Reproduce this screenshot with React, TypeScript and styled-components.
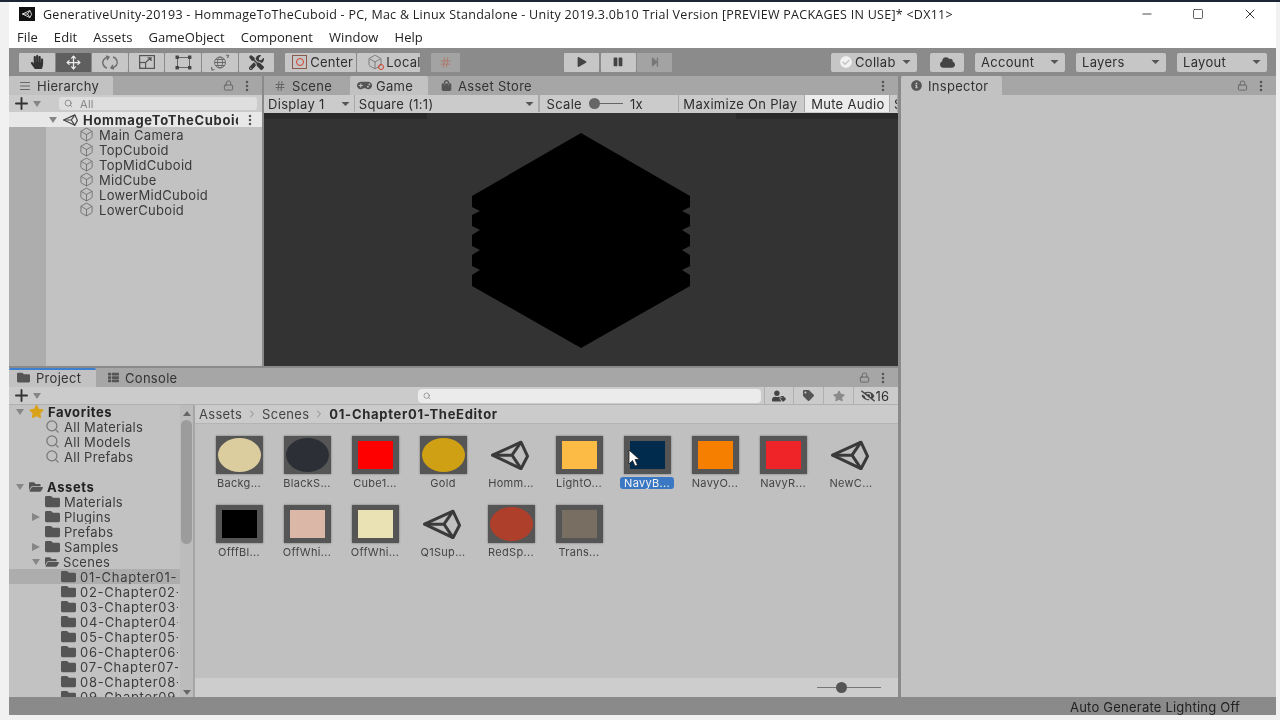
import styled, { createGlobalStyle } from 'styled-components'
import { Box, ChevronRight, EllipsisVertical, Hash, Lock, Minus, Move, Plus, Search, Square, TextAlignJustify, X } from 'lucide-react'
import {
  FaCheckCircle,
  FaCloud,
  FaEyeSlash,
  FaFolder,
  FaFolderOpen,
  FaGamepad,
  FaHandPaper,
  FaInfoCircle,
  FaPause,
  FaPlay,
  FaShoppingBag,
  FaStar,
  FaStepForward,
  FaTag,
  FaThList,
  FaTools,
  FaUserTag,
} from 'react-icons/fa'

const INK = '#2e2e2e'
const FONT = '"Inter", "Liberation Sans", sans-serif'

const GlobalStyle = createGlobalStyle`
  html, body {
    margin: 0;
    padding: 0;
    background: #f1f1f1;
    overflow: hidden;
  }
  * { box-sizing: border-box; }
`

function UnityMark({ size = 38, color = '#333' }: { size?: number; color?: string }) {
  return (
    <svg width={size} height={size * 0.8} viewBox="0 0 38 30" fill="none" stroke={color} strokeWidth="3" strokeLinejoin="round">
      <path d="M1.5 15 L30 2 L36.5 16 L30 28.5 Z" />
      <path d="M1.5 15 H21 L30 2 M21 15 L30 28.5" />
    </svg>
  )
}

function Caret({ dir = 'down', color = '#868686' }: { dir?: 'down' | 'right'; color?: string }) {
  return (
    <svg width="10" height="10" viewBox="0 0 10 10" fill={color}>
      {dir === 'down' ? <path d="M1 2 H9 L5 8 Z" /> : <path d="M1 1 L9 5 L1 9 Z" />}
    </svg>
  )
}

function DropCaret() {
  return (
    <svg width="9" height="6" viewBox="0 0 9 6" fill="#555">
      <path d="M0.5 1 H8.5 L4.5 5 Z" />
    </svg>
  )
}

function MoveDots() {
  return <EllipsisVertical size={14} color="#555" strokeWidth={2.4} />
}

function RotateIcon() {
  return (
    <svg width="18" height="15" viewBox="0 0 18 15" fill="none" stroke="#6e6e6e" strokeWidth="1.4">
      <path d="M7 2 C3 3 1 6 2 9 C2.6 11 4 12.5 6 13" />
      <path d="M5 1 L8 2 L6 5" />
      <path d="M11 13 C15 12 17 9 16 6 C15.4 4 14 2.5 12 2" />
      <path d="M13 14 L10 13 L12 10" />
    </svg>
  )
}

function ScaleIcon() {
  return (
    <svg width="16" height="14" viewBox="0 0 16 14" fill="none" stroke="#555" strokeWidth="1.2">
      <rect x="0.6" y="0.6" width="14.8" height="12.8" />
      <rect x="0.6" y="7.5" width="6" height="5.9" />
      <path d="M7 7 L12 2.8 M8.5 2.8 H12 V6" />
    </svg>
  )
}

function RectIcon() {
  return (
    <svg width="17" height="15" viewBox="0 0 17 15" fill="#444" stroke="none">
      <path d="M3 2 H14 V3 H3 Z M3 12 H14 V13 H3 Z M2 3 H3 V12 H2 Z M14 3 H15 V12 H14 Z" fill="#666" />
      <rect x="0.5" y="0.5" width="3.4" height="3.4" />
      <rect x="13" y="0.5" width="3.4" height="3.4" />
      <rect x="0.5" y="11" width="3.4" height="3.4" />
      <rect x="13" y="11" width="3.4" height="3.4" />
    </svg>
  )
}

function TransformIcon() {
  return (
    <svg width="20" height="17" viewBox="0 0 20 17" fill="none" stroke="#6a6a6a" strokeWidth="1">
      <circle cx="10" cy="8.5" r="5.5" />
      <ellipse cx="10" cy="8.5" rx="2.5" ry="5.5" />
      <path d="M4.5 8.5 H15.5 M5.5 5.5 H14.5 M5.5 11.5 H14.5" />
      <path d="M16 1 L18.5 1.5 L17.5 4 M1.5 13 L2 16 L4.5 15.5" strokeWidth="1.2" />
    </svg>
  )
}

function Hexagon() {
  return (
    <svg width="218" height="216" viewBox="0 0 218 216" fill="#000">
      <path d="M109 0 L218 63 V74 L210 78 L218 82 V93 L210 97 L218 102 V113 L210 117 L218 122 V133 L210 137 L218 142 V153 L109 215 L0 153 V142 L8 137 L0 133 V122 L8 117 L0 113 V102 L8 97 L0 93 V82 L8 78 L0 74 V63 Z" />
    </svg>
  )
}

type Asset = { label: string; kind: 'sphere' | 'square' | 'unity'; color?: string; selected?: boolean }

const assets: Asset[] = [
  { label: 'Backg...', kind: 'sphere', color: '#dccd9f' },
  { label: 'BlackS...', kind: 'sphere', color: '#2c3036' },
  { label: 'Cube1...', kind: 'square', color: '#fe0000' },
  { label: 'Gold', kind: 'sphere', color: '#cf9f14' },
  { label: 'Homm...', kind: 'unity' },
  { label: 'LightO...', kind: 'square', color: '#fbbb45' },
  { label: 'NavyB...', kind: 'square', color: '#012b4d', selected: true },
  { label: 'NavyO...', kind: 'square', color: '#f77f00' },
  { label: 'NavyR...', kind: 'square', color: '#ee2428' },
  { label: 'NewC...', kind: 'unity' },
  { label: 'OfffBl...', kind: 'square', color: '#000000' },
  { label: 'OffWhi...', kind: 'square', color: '#dab7a7' },
  { label: 'OffWhi...', kind: 'square', color: '#eae2b4' },
  { label: 'Q1Sup...', kind: 'unity' },
  { label: 'RedSp...', kind: 'sphere', color: '#ae3f2b' },
  { label: 'Trans...', kind: 'square', color: '#786e62' },
]

const hierarchy = ['Main Camera', 'TopCuboid', 'TopMidCuboid', 'MidCube', 'LowerMidCuboid', 'LowerCuboid']

const chapters = ['01-Chapter01-', '02-Chapter02-', '03-Chapter03-', '04-Chapter04-', '05-Chapter05-', '06-Chapter06-', '07-Chapter07-', '08-Chapter08-', '09-Chapter09-']

export default function App() {
  return (
    <>
      <GlobalStyle />
      <Screen>
        <TopEdge />
        <Editor>
          <TitleBar>
            <AppBadge>
              <UnityMark size={10} color="#fff" />
            </AppBadge>
            <TitleText>
              GenerativeUnity-20193 - HommageToTheCuboid - PC, Mac &amp; Linux Standalone - Unity 2019.3.0b10 Trial Version [PREVIEW PACKAGES IN USE]* &lt;DX11&gt;
            </TitleText>
            <WindowButtons>
              <Minus size={14} strokeWidth={1.4} />
              <Square size={12} strokeWidth={1.4} />
              <X size={16} strokeWidth={1.4} />
            </WindowButtons>
          </TitleBar>

          <MenuBar>
            <span>File</span>
            <span>Edit</span>
            <span>Assets</span>
            <span>GameObject</span>
            <span>Component</span>
            <span>Window</span>
            <span>Help</span>
          </MenuBar>

          <Toolbar>
            <ToolGroup>
              <ToolButton><FaHandPaper size={14} color="#333" /></ToolButton>
              <ToolButton $active><Move size={15} color="#eee" /></ToolButton>
              <ToolButton><RotateIcon /></ToolButton>
              <ToolButton><ScaleIcon /></ToolButton>
              <ToolButton><RectIcon /></ToolButton>
              <ToolButton><TransformIcon /></ToolButton>
              <ToolButton><FaTools size={15} color="#3a3a3a" /></ToolButton>
            </ToolGroup>
            <PivotGroup>
              <PivotButton $width={71}><PivotIcon />Center</PivotButton>
              <PivotButton $width={63}>
                <LocalCube>
                  <Box size={16} color="#777" strokeWidth={1.4} />
                  <LocalDot />
                </LocalCube>
                Local
              </PivotButton>
            </PivotGroup>
            <SnapButton><Hash size={13} color="#b06a55" strokeWidth={1.2} /></SnapButton>
            <PlayGroup>
              <PlayButton><FaPlay size={10} color="#444" /></PlayButton>
              <PlayButton><FaPause size={10} color="#444" /></PlayButton>
              <PlayButton $dim><FaStepForward size={10} color="#777" /></PlayButton>
            </PlayGroup>
            <RightTools>
              <DropButton $width={86}>
                <CollabLabel><FaCheckCircle size={12} color="#f2f2f2" />Collab</CollabLabel>
                <DropCaret />
              </DropButton>
              <CloudButton><FaCloud size={15} color="#444" /></CloudButton>
              <DropButton $width={90}>Account<DropCaret /></DropButton>
              <DropButton $width={90}>Layers<DropCaret /></DropButton>
              <DropButton $width={90}>Layout<DropCaret /></DropButton>
            </RightTools>
          </Toolbar>

          <Workspace>
            <LeftColumn>
              <TopPanels>
                <HierarchyPanel>
                  <TabStrip>
                    <Tab $width={104} $pad={10}>
                      <TextAlignJustify size={12} color="#666" />
                      Hierarchy
                    </Tab>
                    <TabActions>
                      <Lock size={11} color="#666" />
                      <MoveDots />
                    </TabActions>
                  </TabStrip>
                  <SearchRow>
                    <AddButton>
                      <Plus size={19} color="#333" strokeWidth={2.4} />
                      <Caret />
                    </AddButton>
                    <HierarchySearch>
                      <Search size={9} color="#777" />
                      All
                    </HierarchySearch>
                  </SearchRow>
                  <SceneRow>
                    <Caret />
                    <UnityMark size={15} color="#444" />
                    <SceneName>HommageToTheCuboid</SceneName>
                    <MoveDots />
                  </SceneRow>
                  <HierarchyBody>
                    <Gutter />
                    <HierarchyList>
                      {hierarchy.map((name) => (
                        <HierarchyRow key={name}>
                          <Box size={15} color="#666" strokeWidth={1.3} />
                          {name}
                        </HierarchyRow>
                      ))}
                    </HierarchyList>
                  </HierarchyBody>
                </HierarchyPanel>

                <GamePanel>
                  <TabStrip>
                    <Tab $width={86} $pad={10} $inactive>
                      <Hash size={12} color="#666" />
                      Scene
                    </Tab>
                    <Tab $width={78} $pad={7} $gap={4}>
                      <FaGamepad size={15} color="#555" />
                      Game
                    </Tab>
                    <Tab $width={130} $pad={13} $inactive>
                      <FaShoppingBag size={11} color="#555" />
                      Asset Store
                    </Tab>
                    <TabActions>
                      <MoveDots />
                    </TabActions>
                  </TabStrip>
                  <GameBar>
                    <GameDrop $width={91}>Display 1<DropCaret /></GameDrop>
                    <GameDrop $width={184}>Square (1:1)<DropCaret /></GameDrop>
                    <ScaleGroup>
                      Scale
                      <ScaleTrack>
                        <ScaleKnob />
                      </ScaleTrack>
                      1x
                    </ScaleGroup>
                    <GameToggle $width={126}>Maximize On Play</GameToggle>
                    <GameToggle $width={85} $on>Mute Audio</GameToggle>
                    <GameToggle $width={8}>S</GameToggle>
                  </GameBar>
                  <GameView>
                    <Hexagon />
                  </GameView>
                </GamePanel>
              </TopPanels>

              <ProjectPanel>
                <TabStrip>
                  <ProjectTab $width={87} $pad={8}>
                    <FaFolder size={13} color="#555" />
                    Project
                  </ProjectTab>
                  <Tab $width={90} $pad={12} $inactive>
                    <FaThList size={11} color="#555" />
                    Console
                  </Tab>
                  <TabActions>
                    <Lock size={11} color="#666" />
                    <MoveDots />
                  </TabActions>
                </TabStrip>
                <ProjectBar>
                  <AddButton>
                    <Plus size={19} color="#333" strokeWidth={2.4} />
                    <Caret />
                  </AddButton>
                  <ProjectSearch>
                    <Search size={8} color="#777" />
                  </ProjectSearch>
                  <ProjectActions>
                    <ActionCell $width={29}><FaUserTag size={14} color="#444" /></ActionCell>
                    <ActionCell $width={30}><FaTag size={11} color="#555" /></ActionCell>
                    <ActionCell $width={30}><FaStar size={12} color="#8a8a8a" /></ActionCell>
                    <ActionCell $width={43}><FaEyeSlash size={14} color="#444" />16</ActionCell>
                  </ProjectActions>
                </ProjectBar>
                <ProjectBody>
                  <TreePane>
                    <Tree>
                      <TreeRow $indent={6} $bold>
                        <Caret /><FaStar size={15} color="#d9a21b" />Favorites
                      </TreeRow>
                      <TreeRow $indent={36}><Search size={15} color="#777" />All Materials</TreeRow>
                      <TreeRow $indent={36}><Search size={15} color="#777" />All Models</TreeRow>
                      <TreeRow $indent={36}><Search size={15} color="#777" />All Prefabs</TreeRow>
                      <TreeRow $indent={6} />
                      <TreeRow $indent={6} $bold>
                        <Caret /><FaFolderOpen size={14} color="#555" />Assets
                      </TreeRow>
                      <TreeRow $indent={36}><FaFolder size={15} color="#555" />Materials</TreeRow>
                      <TreeRow $indent={22}><Caret dir="right" /><FaFolder size={15} color="#555" />Plugins</TreeRow>
                      <TreeRow $indent={36}><FaFolder size={15} color="#555" />Prefabs</TreeRow>
                      <TreeRow $indent={22}><Caret dir="right" /><FaFolder size={15} color="#555" />Samples</TreeRow>
                      <TreeRow $indent={22}><Caret /><FaFolderOpen size={14} color="#555" />Scenes</TreeRow>
                      {chapters.map((name, index) => (
                        <TreeRow key={name} $indent={52} $selected={index === 0}>
                          <FaFolder size={15} color="#555" />
                          <ChapterName>{name}</ChapterName>
                        </TreeRow>
                      ))}
                    </Tree>
                    <TreeScroll>
                      <ScrollArrow $up />
                      <ScrollThumb />
                      <ScrollArrow />
                    </TreeScroll>
                  </TreePane>
                  <AssetPane>
                    <Breadcrumb>
                      <span>Assets</span>
                      <ChevronRight size={12} color="#888" />
                      <span>Scenes</span>
                      <ChevronRight size={12} color="#888" />
                      <strong>01-Chapter01-TheEditor</strong>
                    </Breadcrumb>
                    <AssetGrid>
                      {assets.map((asset, index) => (
                        <Tile key={index}>
                          <Thumb>
                            {asset.kind === 'unity' ? (
                              <LogoSlot>
                                <UnityMark color="#3a3a3a" />
                              </LogoSlot>
                            ) : (
                              <Frame>
                                <Swatch $round={asset.kind === 'sphere'} $color={asset.color ?? '#000'} />
                              </Frame>
                            )}
                            {asset.selected && (
                              <Pointer width="12" height="18" viewBox="0 0 12 18">
                                <path d="M1 1 V15 L4.5 11.5 L7 17 L9.5 16 L7 10.5 H11.5 Z" fill="#fff" stroke="#222" strokeWidth="0.8" />
                              </Pointer>
                            )}
                          </Thumb>
                          <TileLabel $selected={asset.selected}>{asset.label}</TileLabel>
                        </Tile>
                      ))}
                    </AssetGrid>
                    <SliderBar>
                      <SizeTrack>
                        <SizeKnob />
                      </SizeTrack>
                    </SliderBar>
                  </AssetPane>
                </ProjectBody>
              </ProjectPanel>
            </LeftColumn>

            <InspectorPanel>
              <TabStrip>
                <Tab $width={101} $pad={10}>
                  <FaInfoCircle size={11} color="#555" />
                  Inspector
                </Tab>
                <TabActions>
                  <Lock size={11} color="#666" />
                  <MoveDots />
                </TabActions>
              </TabStrip>
            </InspectorPanel>
          </Workspace>

          <StatusBar>Auto Generate Lighting Off</StatusBar>
        </Editor>
      </Screen>
    </>
  )
}

function PivotIcon() {
  return (
    <PivotSquare>
      <PivotDot />
    </PivotSquare>
  )
}

const Screen = styled.div`
  width: 1280px;
  height: 720px;
  overflow: hidden;
  display: flex;
  flex-direction: column;
  font-family: ${FONT};
  letter-spacing: 0.3px;
  color: ${INK};
  filter: blur(0.6px);
`

const TopEdge = styled.div`
  height: 2px;
  flex: none;
  background: #1c2535;
`

const Editor = styled.div`
  width: 1267px;
  height: 713px;
  margin-left: 9px;
  display: flex;
  flex-direction: column;
  background: #8a8a8a;
`

const TitleBar = styled.div`
  height: 24px;
  flex: none;
  display: flex;
  align-items: center;
  padding-left: 10px;
  background: #fff;
`

const AppBadge = styled.div`
  width: 16px;
  height: 14px;
  background: #111;
  display: flex;
  align-items: center;
  justify-content: center;
`

const TitleText = styled.div`
  margin-left: 8px;
  font-family: "Open Sans", sans-serif;
  font-size: 12.5px;
  letter-spacing: 0.27px;
  color: #222;
  white-space: nowrap;
`

const WindowButtons = styled.div`
  margin-left: auto;
  width: 136px;
  padding-right: 18px;
  display: flex;
  align-items: center;
  justify-content: space-between;
  color: #222;
`

const MenuBar = styled.div`
  height: 22px;
  flex: none;
  display: flex;
  align-items: center;
  gap: 16px;
  padding-left: 8px;
  background: #fff;
  font-family: "Open Sans", sans-serif;
  font-size: 13px;
  letter-spacing: 0.07px;
  color: #222;
`

const Toolbar = styled.div`
  height: 28px;
  flex: none;
  display: flex;
  align-items: center;
  padding: 0 9px 0 10px;
  background: #8b8b8b;
`

const ToolGroup = styled.div`
  display: flex;
  gap: 1px;
`

const ToolButton = styled.div<{ $active?: boolean }>`
  width: 35.6px;
  height: 19px;
  display: flex;
  align-items: center;
  justify-content: center;
  background: ${({ $active }) => ($active ? '#5f5f5f' : '#c6c6c6')};
  border-radius: 1px;
`

const PivotGroup = styled.div`
  display: flex;
  gap: 1px;
  margin-left: 11px;
`

const PivotButton = styled.div<{ $width: number }>`
  width: ${({ $width }) => $width}px;
  height: 19px;
  display: flex;
  align-items: center;
  padding-left: 7px;
  gap: 3px;
  background: #c6c6c6;
  font-size: 13px;
  border-radius: 1px;
`

const PivotSquare = styled.span`
  width: 15px;
  height: 14px;
  display: flex;
  align-items: center;
  justify-content: center;
  border: 1px solid #8a5a4a;
`

const PivotDot = styled.span`
  width: 8px;
  height: 8px;
  border-radius: 50%;
  border: 1.5px solid #d2402a;
`

const LocalCube = styled.span`
  position: relative;
  display: flex;
  margin-left: 3px;
`

const LocalDot = styled.span`
  position: absolute;
  right: -1px;
  bottom: 0;
  width: 6px;
  height: 6px;
  border-radius: 50%;
  border: 1.5px solid #d2402a;
`

const SnapButton = styled.div`
  width: 29px;
  height: 19px;
  margin-left: 11px;
  display: flex;
  align-items: center;
  justify-content: center;
  background: #a3a3a3;
  border-radius: 1px;
`

const PlayGroup = styled.div`
  display: flex;
  gap: 1.5px;
  margin-left: 104px;
`

const PlayButton = styled.div<{ $dim?: boolean }>`
  width: 35px;
  height: 19px;
  display: flex;
  align-items: center;
  justify-content: center;
  background: ${({ $dim }) => ($dim ? '#a3a3a3' : '#c6c6c6')};
  border-radius: 1px;
`

const RightTools = styled.div`
  margin-left: auto;
  display: flex;
  gap: 11px;
  align-items: center;
`

const DropButton = styled.div<{ $width: number }>`
  width: ${({ $width }) => $width}px;
  height: 19px;
  padding: 0 6px;
  display: flex;
  align-items: center;
  justify-content: space-between;
  background: #c6c6c6;
  font-size: 13px;
  border-radius: 2px;
`

const CollabLabel = styled.span`
  display: flex;
  align-items: center;
  gap: 3px;
  margin-left: 3px;
`

const CloudButton = styled.div`
  width: 34px;
  height: 19px;
  margin-left: 2px;
  display: flex;
  align-items: center;
  justify-content: center;
  background: #c6c6c6;
  border-radius: 2px;
`

const Workspace = styled.div`
  flex: 1;
  min-height: 0;
  display: flex;
  gap: 3px;
`

const LeftColumn = styled.div`
  width: 889px;
  display: flex;
  flex-direction: column;
  gap: 2px;
`

const TopPanels = styled.div`
  height: 290px;
  flex: none;
  display: flex;
  gap: 2px;
`

const HierarchyPanel = styled.section`
  width: 253px;
  display: flex;
  flex-direction: column;
  background: #c2c2c2;
`

const TabStrip = styled.div`
  height: 19px;
  flex: none;
  display: flex;
  background: #a6a6a6;
`

const Tab = styled.div<{ $width: number; $pad: number; $gap?: number; $inactive?: boolean }>`
  width: ${({ $width }) => $width}px;
  display: flex;
  align-items: center;
  gap: ${({ $gap }) => $gap ?? 6}px;
  padding-left: ${({ $pad }) => $pad}px;
  font-size: 13px;
  background: ${({ $inactive }) => ($inactive ? 'transparent' : '#c2c2c2')};
  border-radius: 2px 2px 0 0;
  color: #333;
`

const ProjectTab = styled(Tab)`
  padding-bottom: 2px;
  border-top: 2px solid #3f7fd0;
`

const TabActions = styled.div`
  margin-left: auto;
  padding-right: 8px;
  display: flex;
  align-items: center;
  gap: 6px;
`

const SearchRow = styled.div`
  height: 17px;
  flex: none;
  display: flex;
  align-items: center;
  background: #cbcbcb;
`

const AddButton = styled.div`
  width: 50px;
  padding-left: 3px;
  flex: none;
  display: flex;
  align-items: center;
  gap: 1px;
`

const HierarchySearch = styled.div`
  width: 198px;
  height: 13px;
  display: flex;
  align-items: center;
  gap: 7px;
  padding-left: 5px;
  border-radius: 3px;
  background: #dedede;
  font-size: 11px;
  color: #888;
`

const SceneRow = styled.div`
  height: 15px;
  flex: none;
  display: flex;
  align-items: center;
  gap: 5px;
  padding: 0 5px 0 39px;
  background: #e8e8e8;
  font-size: 13px;
  font-weight: 700;
  letter-spacing: 0.7px;
`

const SceneName = styled.span`
  width: 155px;
  overflow: hidden;
  white-space: nowrap;
`

const HierarchyBody = styled.div`
  flex: 1;
  display: flex;
`

const Gutter = styled.div`
  width: 37px;
  background: #adadad;
`

const HierarchyList = styled.div`
  flex: 1;
  padding: 0 0 0 33px;
`

const HierarchyRow = styled.div`
  height: 15px;
  display: flex;
  align-items: center;
  gap: 5px;
  font-size: 13px;
  color: #3a3a3a;
`

const GamePanel = styled.section`
  flex: 1;
  min-width: 0;
  display: flex;
  flex-direction: column;
`

const GameBar = styled.div`
  height: 18px;
  flex: none;
  display: flex;
  padding-bottom: 1px;
  background: #cbcbcb;
  font-size: 13px;
`

const GameDrop = styled.div<{ $width: number }>`
  width: ${({ $width }) => $width}px;
  display: flex;
  align-items: center;
  justify-content: space-between;
  padding: 0 4px 0 4px;
  border-right: 1px solid #a8a8a8;
`

const ScaleGroup = styled.div`
  width: 141px;
  display: flex;
  align-items: center;
  padding-left: 7px;
  gap: 7px;
  border-left: 1px solid #a8a8a8;
  border-right: 1px solid #a8a8a8;
`

const ScaleTrack = styled.div`
  width: 34px;
  height: 1px;
  background: #666;
  position: relative;
`

const ScaleKnob = styled.span`
  position: absolute;
  left: 0;
  top: -5px;
  width: 11px;
  height: 11px;
  border-radius: 50%;
  background: #666;
`

const GameToggle = styled.div<{ $width: number; $on?: boolean }>`
  width: ${({ $width }) => $width}px;
  display: flex;
  align-items: center;
  padding-left: ${({ $on }) => ($on ? 6 : 4)}px;
  overflow: hidden;
  white-space: nowrap;
  background: ${({ $on }) => ($on ? '#ececec' : 'transparent')};
  border-right: 1px solid #a8a8a8;
`

const GameView = styled.div`
  flex: 1;
  display: flex;
  align-items: center;
  justify-content: center;
  padding-top: 2px;
  background:
    linear-gradient(#2a2a2a, #2a2a2a) left top / 163px 6px no-repeat,
    linear-gradient(#2a2a2a, #2a2a2a) right top / 162px 6px no-repeat,
    #333333;
`

const ProjectPanel = styled.section`
  flex: 1;
  min-height: 0;
  display: flex;
  flex-direction: column;
  background: #c2c2c2;
`

const ProjectBar = styled.div`
  height: 18px;
  flex: none;
  display: flex;
  align-items: center;
  background: #cbcbcb;
  border-bottom: 1px solid #b0b0b0;
`

const ProjectSearch = styled.div`
  width: 343px;
  height: 14px;
  margin-left: 359px;
  display: flex;
  align-items: center;
  padding-left: 5px;
  border-radius: 4px;
  background: #ebebeb;
`

const ProjectActions = styled.div`
  margin-left: auto;
  height: 100%;
  display: flex;
  padding-right: 2px;
`

const ActionCell = styled.div<{ $width: number }>`
  width: ${({ $width }) => $width}px;
  display: flex;
  align-items: center;
  justify-content: center;
  gap: 1px;
  font-size: 13px;
  border-left: 1px solid #b0b0b0;
`

const ProjectBody = styled.div`
  flex: 1;
  min-height: 0;
  display: flex;
`

const TreePane = styled.div`
  width: 186px;
  flex: none;
  display: flex;
  border-right: 2px solid #a6a6a6;
  overflow: hidden;
`

const Tree = styled.div`
  width: 171px;
  flex: none;
  overflow: hidden;
  margin-top: -1px;
`

const TreeRow = styled.div<{ $indent: number; $bold?: boolean; $selected?: boolean }>`
  height: 15px;
  display: flex;
  align-items: center;
  gap: 4px;
  padding-left: ${({ $indent }) => $indent}px;
  white-space: nowrap;
  overflow: hidden;
  font-size: 13px;
  letter-spacing: ${({ $bold }) => ($bold ? 0.6 : 0.3)}px;
  font-weight: ${({ $bold }) => ($bold ? 700 : 400)};
  color: ${({ $bold }) => ($bold ? '#222' : '#3c3c3c')};
  background: ${({ $selected }) => ($selected ? '#adadad' : 'transparent')};

  svg {
    flex: none;
  }
`

const ChapterName = styled.span`
  width: 98px;
  overflow: hidden;
  letter-spacing: 0.7px;
`

const TreeScroll = styled.div`
  flex: 1;
  display: flex;
  flex-direction: column;
  align-items: center;
  padding: 6px 0 2px;
  gap: 4px;
  background: #bcbcbc;
`

const ScrollArrow = styled.span<{ $up?: boolean }>`
  width: 0;
  height: 0;
  border-left: 4px solid transparent;
  border-right: 4px solid transparent;
  border-${({ $up }) => ($up ? 'bottom' : 'top')}: 5px solid #666;
`

const ScrollThumb = styled.span`
  width: 11px;
  height: 124px;
  border-radius: 6px;
  background: #9c9c9c;
  margin-bottom: auto;
`

const AssetPane = styled.div`
  flex: 1;
  min-width: 0;
  display: flex;
  flex-direction: column;
`

const Breadcrumb = styled.div`
  height: 19px;
  flex: none;
  display: flex;
  align-items: center;
  gap: 4px;
  padding-left: 4px;
  background: #cbcbcb;
  border-bottom: 1px solid #b4b4b4;
  font-size: 13px;
  color: #444;

  strong {
    color: #2a2a2a;
    letter-spacing: 0.7px;
  }
`

const AssetGrid = styled.div`
  flex: 1;
  display: grid;
  grid-template-columns: repeat(10, 68px);
  grid-auto-rows: 69px;
  align-content: start;
  padding: 7px 0 0 10px;
  background: #c0c0c0;
`

const Tile = styled.div`
  display: flex;
  flex-direction: column;
  align-items: center;
`

const Thumb = styled.div`
  position: relative;
  width: 47px;
  height: 38px;
  margin-top: 5px;
  display: flex;
  align-items: center;
  justify-content: center;
`

const LogoSlot = styled.div`
  display: flex;
  margin-right: 3px;
`

const Frame = styled.div`
  width: 47px;
  height: 38px;
  display: flex;
  align-items: center;
  justify-content: center;
  background: #555;
  box-shadow: 0 0 2px rgba(0, 0, 0, 0.4);
`

const Swatch = styled.div<{ $round: boolean; $color: string }>`
  width: ${({ $round }) => ($round ? 43 : 35)}px;
  height: ${({ $round }) => ($round ? 34 : 28)}px;
  border-radius: ${({ $round }) => ($round ? '50%' : '0')};
  background: ${({ $color }) => $color};
`

const Pointer = styled.svg`
  position: absolute;
  left: 4px;
  top: 13px;
`

const TileLabel = styled.div<{ $selected?: boolean }>`
  margin-top: 3px;
  height: 12px;
  width: ${({ $selected }) => ($selected ? '54px' : 'auto')};
  border-radius: 3px;
  display: flex;
  align-items: center;
  justify-content: center;
  font-size: 11px;
  letter-spacing: 0.3px;
  color: ${({ $selected }) => ($selected ? '#f2f2f2' : '#444')};
  background: ${({ $selected }) => ($selected ? '#3b78c4' : 'transparent')};
`

const SliderBar = styled.div`
  height: 19px;
  flex: none;
  display: flex;
  align-items: center;
  justify-content: flex-end;
  padding-right: 17px;
  background: #cdcdcd;
`

const SizeTrack = styled.div`
  width: 64px;
  height: 1px;
  background: #777;
  position: relative;
`

const SizeKnob = styled.span`
  position: absolute;
  left: 19px;
  top: -5px;
  width: 11px;
  height: 11px;
  border-radius: 50%;
  background: #555;
`

const InspectorPanel = styled.section`
  flex: 1;
  background: #c2c2c2;
`

const StatusBar = styled.div`
  height: 18px;
  flex: none;
  display: flex;
  align-items: center;
  justify-content: flex-end;
  padding: 1px 36px 0 0;
  background: #8a8a8a;
  font-size: 13px;
  letter-spacing: 0.22px;
  color: #222;
`
